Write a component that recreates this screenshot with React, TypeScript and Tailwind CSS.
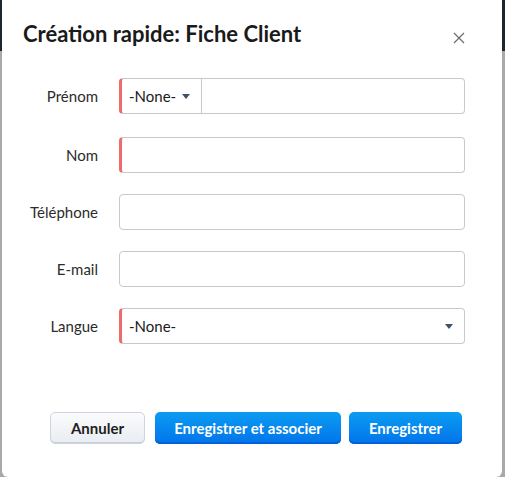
import React from "react";

function Caret() {
    return (
        <svg width="8" height="5" viewBox="0 0 8 5" className="shrink-0">
            <path d="M0 0 L8 0 L4 5 Z" fill="#3c5369" />
        </svg>
    );
}

interface FieldProps {
    label: string;
    required?: boolean;
    extra?: string;
    children?: React.ReactNode;
}

function Field({ label, required, extra = "", children }: FieldProps) {
    return (
        <>
            <label className={`text-right text-[15px] text-[#2b2b2b] leading-[36px] ${extra}`}>{label}</label>
            <div
                className={`h-[36px] rounded-[4px] border border-[#c9c9c9] bg-white flex overflow-hidden ${extra} ${
                    required ? "border-l-[3px] border-l-[#ee6b6b]" : ""
                }`}
            >
                {children}
            </div>
        </>
    );
}

export default function App() {
    return (
        <div
            className="w-[505px] h-[477px] flex pl-[2px] pr-[3px] bg-[linear-gradient(to_bottom,#1d2531_0,#1d2531_51px,#a9a9a9_51px)]"
            style={{ fontFamily: "Lato, 'Noto Sans', sans-serif" }}
        >
            <div className="w-[500px] h-full bg-white rounded-b-[6px] flex flex-col">
                <header className="flex items-start pl-[21px] pr-[37px] pt-[20px]">
                    <h1 className="text-[22px] leading-[28px] font-bold text-[#1a1a1a]">Création rapide: Fiche Client</h1>
                    <button className="ml-auto mt-[12px] text-[#6b6b6b]">
                        <svg width="12" height="12" viewBox="0 0 12 12">
                            <path d="M1 1 L11 11 M11 1 L1 11" stroke="currentColor" strokeWidth="1.2" />
                        </svg>
                    </button>
                </header>

                <div className="mt-[30px] grid grid-cols-[96px_346px] gap-x-[21px] gap-y-[21px]">
                    <Field label="Prénom" required extra="mb-[2px]">
                        <div className="w-[80px] flex items-center justify-between pl-[7px] pr-[11px] border-r border-[#c9c9c9] text-[15px] text-[#1a1a1a]">
                            -None-
                            <Caret />
                        </div>
                        <div className="flex-1" />
                    </Field>
                    <Field label="Nom" required />
                    <Field label="Téléphone" />
                    <Field label="E-mail" />
                    <Field label="Langue" required>
                        <div className="flex-1 flex items-center justify-between pl-[7px] pr-[11px] text-[15px] text-[#1a1a1a]">
                            -None-
                            <Caret />
                        </div>
                    </Field>
                </div>

                <footer className="mt-auto mb-[33px] flex items-center pl-[48px]">
                    <button className="w-[95px] h-[32px] rounded-[5px] border border-[#cfd3dc] bg-[linear-gradient(to_bottom,#fafbfc,#e9ecf1)] text-[15px] font-bold text-[#1e1e1e] shadow-[inset_0_-1px_0_#c9ced8]">
                        Annuler
                    </button>
                    <button className="ml-[10px] w-[186px] h-[32px] rounded-[5px] bg-[linear-gradient(to_bottom,#0b9cf2,#0274ea)] text-[15px] font-bold text-white shadow-[inset_0_-2px_0_#0062d8]">
                        Enregistrer et associer
                    </button>
                    <button className="ml-[8px] w-[113px] h-[32px] rounded-[5px] bg-[linear-gradient(to_bottom,#0b9cf2,#0274ea)] text-[15px] font-bold text-white shadow-[inset_0_-2px_0_#0062d8]">
                        Enregistrer
                    </button>
                </footer>
            </div>
        </div>
    );
}
